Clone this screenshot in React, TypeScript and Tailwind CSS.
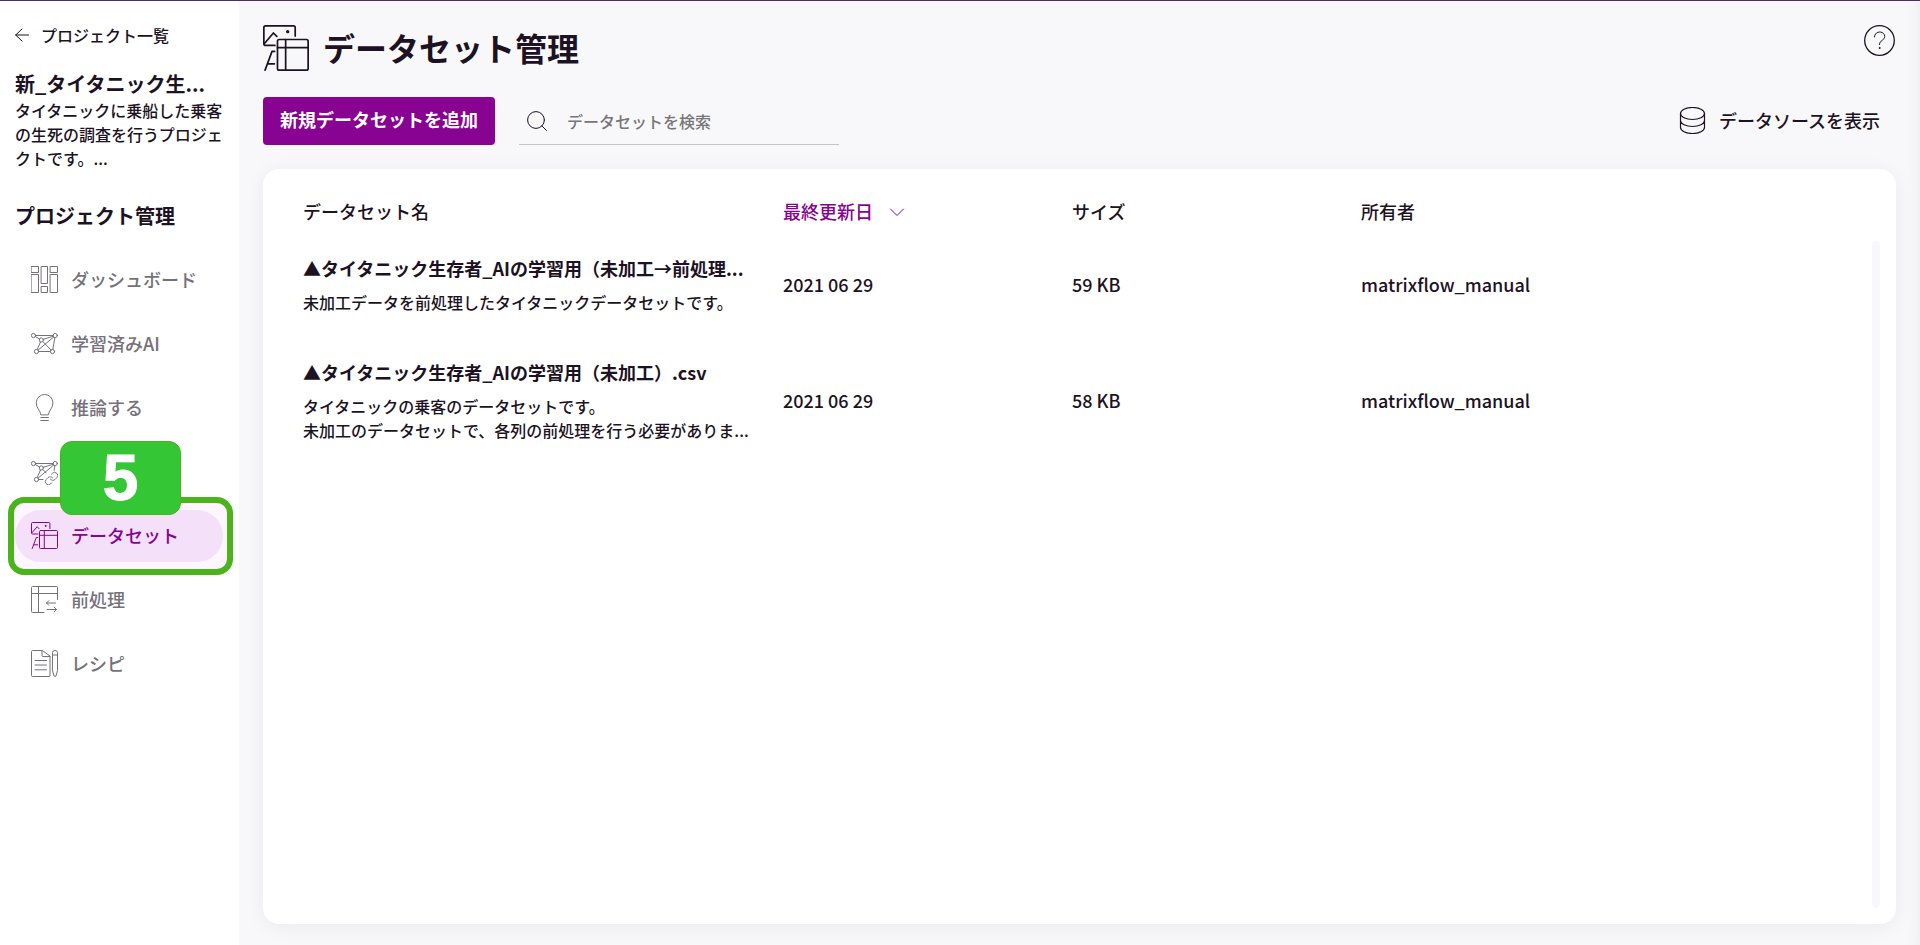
import { useState } from "react";
import type { ReactNode } from "react";

type IconProps = { className?: string };

function Svg({
  className,
  viewBox = "0.5 0.5 27 27",
  children,
}: {
  className?: string;
  viewBox?: string;
  children: ReactNode;
}) {
  return (
    <svg
      viewBox={viewBox}
      fill="none"
      stroke="currentColor"
      strokeLinecap="round"
      strokeLinejoin="round"
      className={className}
      aria-hidden="true"
    >
      {children}
    </svg>
  );
}

function DashboardIcon({ className }: IconProps) {
  return (
    <Svg className={className}>
      <rect x="1" y="1" width="7" height="6" />
      <rect x="1" y="9" width="7" height="18" />
      <rect x="11" y="1" width="6" height="17" />
      <rect x="11" y="21" width="6" height="6" />
      <rect x="20" y="1" width="7" height="6" />
      <rect x="20" y="9" width="7" height="18" />
    </Svg>
  );
}

function NetworkIcon({ className }: IconProps) {
  return (
    <Svg className={className}>
      <circle cx="3" cy="6" r="2.1" />
      <circle cx="24.7" cy="6" r="2.1" />
      <circle cx="10.8" cy="10.5" r="2.1" />
      <circle cx="6" cy="22" r="2.1" />
      <circle cx="22" cy="22" r="2.1" />
      <path d="M5.1 6h17.5M4.9 7.1l4 2.3M12.9 9.8l9.8-3.1M23.2 7.5L7.6 20.6M24.4 8.1l-2.1 11.8M10 12.5L6.7 20M12.3 12l8.2 8.5M8.1 22h11.8" />
    </Svg>
  );
}

function NetworkLinkIcon({ className }: IconProps) {
  return (
    <Svg className={className}>
      <circle cx="3" cy="6" r="2.1" />
      <circle cx="24.7" cy="6" r="2.1" />
      <circle cx="10.8" cy="10.5" r="2.1" />
      <circle cx="6" cy="22" r="2.1" />
      <path d="M5.1 6h17.5M4.9 7.1l4 2.3M12.9 9.8l9.8-3.1M23.2 7.5L7.6 20.6M24.4 8.1l-.8 4.8M10 12.5L6.7 20M12.3 12l3.2 3.3M8.1 22h4.4" />
      <g transform="translate(13.6 13.6) scale(.62)" strokeWidth="1.6">
        <path d="M10 13a5 5 0 0 0 7.54.54l3-3a5 5 0 0 0-7.07-7.07l-1.72 1.71" />
        <path d="M14 11a5 5 0 0 0-7.54-.54l-3 3a5 5 0 0 0 7.07 7.07l1.71-1.71" />
      </g>
    </Svg>
  );
}

function BulbIcon({ className }: IconProps) {
  return (
    <Svg className={className}>
      <path d="M10.3 21c-.5-4.5-4.5-6-4.5-11.7a8.3 8.3 0 0 1 16.6 0c0 5.700-4 7.200-4.500 11.700zM10.300 24h7.600M10.300 27h7.600" />
    </Svg>
  );
}

function DatasetIcon({ className }: IconProps) {
  return (
    <Svg className={className}>
      <path d="M19.4 7V2a1 1 0 0 0-1-1H2a1 1 0 0 0-1 1v9.500a1 1 0 0 0 1 1h5.500" />
      <path d="M1.500 11.200L6.600 5.200l2 2M1.700 27L5.800 16h1.500M3.500 23.300H7.200" />
      <circle cx="15" cy="4.4" r=".5" fill="currentColor" />
      <rect x="9" y="9" width="18" height="18" rx="1" />
      <path d="M13.800 9v18M9 13.800h18" />
    </Svg>
  );
}

function PreprocessIcon({ className }: IconProps) {
  return (
    <Svg className={className}>
      <path d="M13.500 27H2a1 1 0 0 1-1-1V2a1 1 0 0 1 1-1h24a1 1 0 0 1 1 1v12M8 1v26M1 8h26" />
      <path d="M25 17.500H16M18.300 15.200L16 17.500l2.300 2.300M16.700 24h9.300M23.700 21.700L26 24l-2.300 2.300" />
    </Svg>
  );
}

function RecipeIcon({ className }: IconProps) {
  return (
    <Svg className={className}>
      <path d="M11.500 1H2a1 1 0 0 0-1 1v24a1 1 0 0 0 1 1h16.500a1 1 0 0 0 1-1V7zM11.500 1v5a1 1 0 0 0 1 1h7M4.500 11H16M4.500 15.500H16M4.500 20.300H16" />
      <path d="M22 5.500V3a2.500 2 0 0 1 5 0v18l-1.500 5.500q-1 1-2 0L22 21zM22 5.500h5" />
    </Svg>
  );
}

function ArrowLeftIcon({ className }: IconProps) {
  return (
    <Svg className={className} viewBox="0 0 14 14">
      <path d="M13.500 7H.7M7 1L.7 7 7 13" />
    </Svg>
  );
}

function SearchIcon({ className }: IconProps) {
  return (
    <Svg className={className} viewBox="0 0 20 20">
      <circle cx="9" cy="9" r="8.4" />
      <path d="M14.800 14.800l4.700 4.700" />
    </Svg>
  );
}

function DatabaseIcon({ className }: IconProps) {
  return (
    <Svg className={className}>
      <g strokeWidth="1.2">
        <ellipse cx="14" cy="7" rx="12" ry="6" />
        <path d="M2 7v14c0 3.300 5.400 6 12 6s12-2.700 12-6V7M2 14c0 3.300 5.400 6 12 6s12-2.700 12-6" />
      </g>
    </Svg>
  );
}

function HelpIcon({ className }: IconProps) {
  return (
    <Svg className={className} viewBox="0 0 32 32">
      <circle cx="15.500" cy="15.500" r="14.800" strokeWidth="1.3" />
      <path d="M10.500 12c0-6.800 10.200-6.500 10.200-.5 0 4-5.200 3.500-5.200 8" />
      <circle cx="15.500" cy="23" r=".5" fill="currentColor" />
    </Svg>
  );
}

function ChevronIcon({ className }: IconProps) {
  return (
    <Svg className={className} viewBox="0 0 16 16">
      <path d="M1.500 5L8 11.500 14.500 5" />
    </Svg>
  );
}

const navItems = [
  { id: "dashboard", label: "ダッシュボード", Icon: DashboardIcon },
  { id: "models", label: "学習済みAI", Icon: NetworkIcon },
  { id: "inference", label: "推論する", Icon: BulbIcon },
  { id: "service", label: "", Icon: NetworkLinkIcon },
  { id: "dataset", label: "データセット", Icon: DatasetIcon },
  { id: "preprocess", label: "前処理", Icon: PreprocessIcon },
  { id: "recipe", label: "レシピ", Icon: RecipeIcon },
];

const datasets = [
  {
    name: "▲タイタニック生存者_AIの学習用（未加工→前処理...",
    description: ["未加工データを前処理したタイタニックデータセットです。"],
    updatedAt: "2021 06 29",
    size: "59 KB",
    owner: "matrixflow_manual",
  },
  {
    name: "▲タイタニック生存者_AIの学習用（未加工）.csv",
    description: ["タイタニックの乗客のデータセットです。", "未加工のデータセットで、各列の前処理を行う必要がありま..."],
    updatedAt: "2021 06 29",
    size: "58 KB",
    owner: "matrixflow_manual",
  },
];

function StepMarker({ step }: { step: number }) {
  return (
    <>
      <span className="pointer-events-none absolute -inset-y-[13px] -right-[10px] -left-[7px] rounded-2xl border-6 border-[#4bb41d] bg-[#fdf6fe]" />
      <span className="pointer-events-none absolute bottom-[47px] left-[45px] z-20 flex h-[74px] w-[121px] items-center justify-center rounded-xl border border-[#4bb41d] bg-[#34c634] font-['Liberation_Sans',sans-serif] text-[64px] leading-none font-bold text-white [-webkit-text-stroke:1px_white]">
        {step}
      </span>
    </>
  );
}

function Sidebar() {
  const [active, setActive] = useState("dataset");

  return (
    <aside className="w-[239px] shrink-0 bg-white">
      <a href="#projects" className="mt-[22px] ml-[15px] flex items-center gap-3 text-base leading-6 font-medium">
        <ArrowLeftIcon className="size-[14px]" />
        プロジェクト一覧
      </a>
      <div className="mt-[22px] px-[15px]">
        <h2 className="text-xl leading-[29px] font-bold whitespace-nowrap">新_タイタニック生...</h2>
        <p className="text-base leading-6 font-medium whitespace-nowrap">
          タイタニックに乗船した乗客
          <br />
          の生死の調査を行うプロジェ
          <br />
          クトです。...
        </p>
        <h3 className="mt-[31px] text-xl leading-[30px] font-bold">プロジェクト管理</h3>
      </div>
      <nav className="mt-[23px] flex flex-col gap-3 pr-4 pl-[15px]">
        {navItems.map(({ id, label, Icon }) => (
          <div key={id} className="relative">
            {id === "dataset" && <StepMarker step={5} />}
            <button
              type="button"
              aria-label={label || id}
              onClick={() => setActive(id)}
              className={`relative flex h-[52px] w-full items-center gap-[13px] rounded-full pb-px pl-4 text-lg leading-[27px] font-medium ${
                id === active ? "bg-[#f4e0f8] text-[#880391]" : "text-[#75717b]"
              }`}
            >
              <Icon className="size-[27px]" />
              {label}
            </button>
          </div>
        ))}
      </nav>
    </aside>
  );
}

function DatasetTable() {
  return (
    <table className="w-full table-fixed text-left text-lg leading-[27px] font-medium">
      <thead>
        <tr className="h-[53px] align-top">
          <th className="w-[480px] font-medium">データセット名</th>
          <th className="w-[289px] font-medium text-[#880391]">
            <button type="button" className="flex items-center gap-4">
              最終更新日
              <ChevronIcon className="size-4" />
            </button>
          </th>
          <th className="w-[289px] font-medium">サイズ</th>
          <th className="font-medium">所有者</th>
        </tr>
      </thead>
      <tbody>
        {datasets.map((dataset) => (
          <tr key={dataset.name}>
            <td className="pt-1 pb-[41px] whitespace-nowrap">
              <p className="font-bold">{dataset.name}</p>
              <div className="mt-2 text-base leading-6">
                {dataset.description.map((line) => (
                  <p key={line}>{line}</p>
                ))}
              </div>
            </td>
            <td className="pb-[38px]">{dataset.updatedAt}</td>
            <td className="pb-[38px]">{dataset.size}</td>
            <td className="pb-[38px]">{dataset.owner}</td>
          </tr>
        ))}
      </tbody>
    </table>
  );
}

export default function App() {
  const [query, setQuery] = useState("");

  return (
    <div className="flex min-h-screen border-t border-[#4b2a70] bg-[#f8f8fb] font-['Noto_Sans_CJK_JP',sans-serif] text-[#1c1223] shadow-[inset_-12px_0_16px_-12px_rgba(0,0,0,0.06)]">
      <Sidebar />
      <main className="flex min-w-0 grow flex-col px-6 pb-[21px]">
        <header className="flex items-start justify-between pt-6">
          <h1 className="flex items-start gap-[14px] text-[32px] leading-[44px] font-bold">
            <DatasetIcon className="size-[46px]" />
            データセット管理
          </h1>
          <button type="button" aria-label="ヘルプ">
            <HelpIcon className="size-8" />
          </button>
        </header>
        <div className="mt-[26px] flex items-center">
          <button
            type="button"
            className="h-12 rounded bg-[#880391] px-[17px] pb-[3px] text-lg leading-[27px] font-bold text-white"
          >
            新規データセットを追加
          </button>
          <label className="ml-6 flex h-12 w-80 items-center gap-5 border-b border-[#c4c3c9] pl-2">
            <SearchIcon className="size-5 shrink-0" />
            <input
              type="text"
              aria-label="データセットを検索"
              placeholder="データセットを検索"
              value={query}
              onChange={(e) => setQuery(e.target.value)}
              className="w-full min-w-0 bg-transparent text-base leading-6 font-medium outline-none placeholder:text-[#767676]"
            />
          </label>
          <button
            type="button"
            className="mr-4 ml-auto flex h-12 items-center gap-[13px] pb-px text-lg leading-[27px] font-medium"
          >
            <DatabaseIcon className="size-[27px]" />
            データソースを表示
          </button>
        </div>
        <section className="mt-6 flex grow gap-4 rounded-2xl bg-white pt-[29px] pr-4 pb-4 pl-10 shadow-[0_3px_20px_rgba(0,0,0,0.06)]">
          <div className="min-w-0 grow">
            <DatasetTable />
          </div>
          <div className="mt-[43px] w-2 shrink-0 rounded-full bg-[#f8f8fb]" />
        </section>
      </main>
    </div>
  );
}
